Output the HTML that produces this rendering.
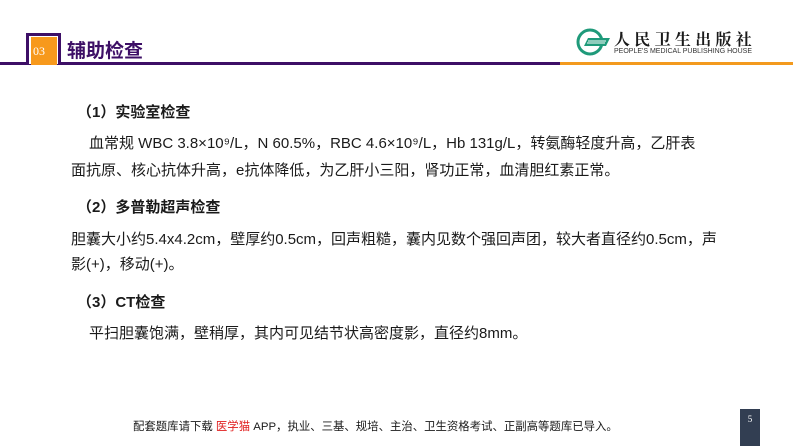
<!DOCTYPE html>
<html><head><meta charset="utf-8"><style>
*{margin:0;padding:0;box-sizing:border-box}
body{width:793px;height:446px;background:#fff;position:relative;overflow:hidden;font-family:"Liberation Sans","Noto Sans CJK SC",sans-serif;color:#1a1a1a}
.a{position:absolute;white-space:nowrap}
.t{font-size:15px}
.b{font-weight:bold}
</style></head><body>
<div class="a" style="left:0;top:62px;width:560px;height:3px;background:#3d0f66"></div>
<div class="a" style="left:560px;top:62px;width:233px;height:3px;background:#f39a1e"></div>
<div class="a" style="left:26px;top:33px;width:35px;height:31px;border:3px solid #3d0f66;border-bottom:none;background:#fff"></div>
<div class="a" style="left:31px;top:37px;width:26px;height:28px;background:#f7991c;color:#fff;font-family:'Liberation Serif',serif;font-size:12px;line-height:28px;padding-left:2px">03</div>
<div class="a b" style="left:67px;top:36px;font-size:19px;color:#3d0f66">辅助检查</div>
<svg class="a" style="left:576px;top:28px" width="36" height="28" viewBox="0 0 36 28"><circle cx="14" cy="14" r="12" fill="none" stroke="#1f9a7a" stroke-width="3"/><rect x="8" y="10" width="24" height="8" fill="#fff"/><path d="M8 18 L30 18 L34 10 L12 10 Z" fill="#1f9a7a"/><path d="M12 13h18M11 15h18" stroke="#fff" stroke-width="1"/></svg>
<div class="a b" style="left:614px;top:27px;font-size:16px;letter-spacing:4.3px;font-family:'Noto Serif CJK SC',serif">人民卫生出版社</div>
<div class="a" style="left:614px;top:48px;font-size:7px;color:#333">PEOPLE'S MEDICAL PUBLISHING HOUSE</div>
<div class="a t b" style="left:77px;top:101px">（1）实验室检查</div>
<div class="a t" style="left:89px;top:132px">血常规 WBC 3.8×10⁹/L，N 60.5%，RBC 4.6×10⁹/L，Hb 131g/L，转氨酶轻度升高，乙肝表</div>
<div class="a t" style="left:71px;top:159px">面抗原、核心抗体升高，e抗体降低，为乙肝小三阳，肾功正常，血清胆红素正常。</div>
<div class="a t b" style="left:77px;top:196px">（2）多普勒超声检查</div>
<div class="a t" style="left:71px;top:228px">胆囊大小约5.4x4.2cm，壁厚约0.5cm，回声粗糙，囊内见数个强回声团，较大者直径约0.5cm，声</div>
<div class="a t" style="left:71px;top:253px">影(+)，移动(+)。</div>
<div class="a t b" style="left:77px;top:291px">（3）CT检查</div>
<div class="a t" style="left:89px;top:322px">平扫胆囊饱满，壁稍厚，其内可见结节状高密度影，直径约8mm。</div>
<div class="a" style="left:133px;top:418px;font-size:11.4px">配套题库请下载 <span style="color:#e02020">医学猫</span> APP，执业、三基、规培、主治、卫生资格考试、正副高等题库已导入。</div>
<div class="a" style="left:740px;top:409px;width:20px;height:37px;background:#323e52;color:#fff;font-family:'Liberation Serif',serif;font-size:9px;text-align:center;padding-top:5px">5</div>
</body></html>
